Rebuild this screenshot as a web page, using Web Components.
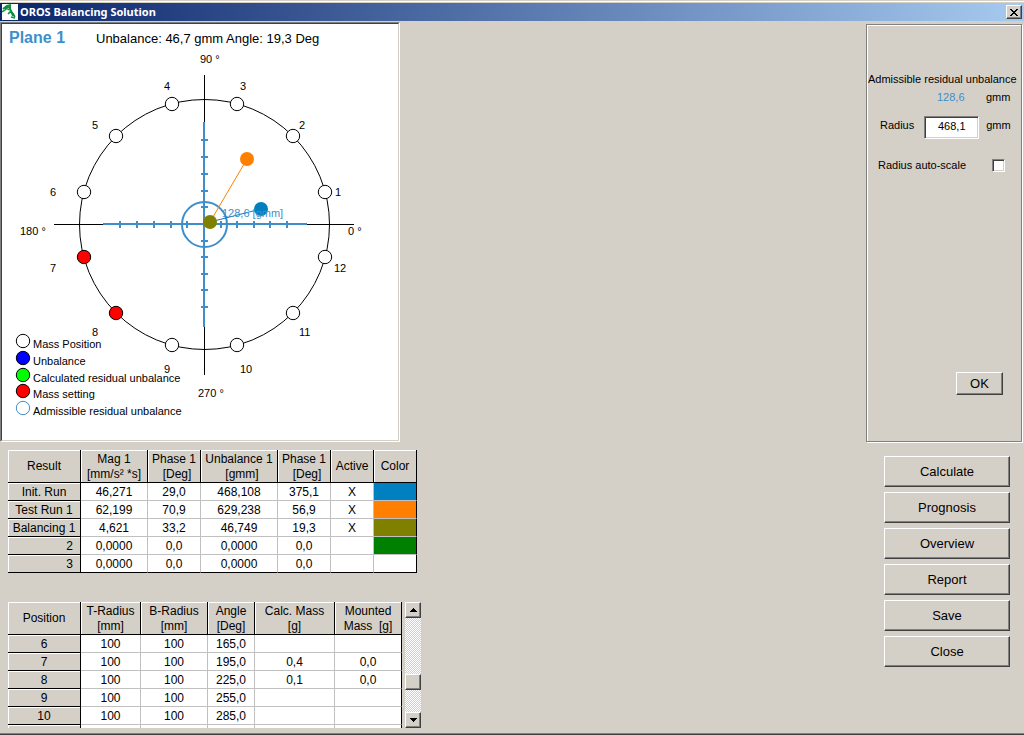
<!DOCTYPE html>
<html lang="en">
<head>
<meta charset="utf-8">
<title>OROS Balancing Solution</title>
<style>
  html, body { margin: 0; }
  body { background: #d4d0c8; color: #000; font-family: "Liberation Sans", Arial, sans-serif; font-size: 12px; }
</style>
</head>
<body>
<balancing-window>
  <title-bar slot="title">OROS Balancing Solution</title-bar>
  <polar-plot slot="plot"></polar-plot>
  <residual-panel slot="settings"></residual-panel>
  <result-table slot="tables"></result-table>
  <position-table slot="tables"></position-table>
  <push-button slot="actions">Calculate</push-button>
  <push-button slot="actions">Prognosis</push-button>
  <push-button slot="actions">Overview</push-button>
  <push-button slot="actions">Report</push-button>
  <push-button slot="actions">Save</push-button>
  <push-button slot="actions">Close</push-button>
</balancing-window>

<script>
class BaseElement extends HTMLElement {
  constructor() {
    super();
    this.attachShadow({ mode: 'open' }).innerHTML = this.template();
  }
}

const bevel = `
  border: 1px solid; border-color: #fff #404040 #404040 #fff;
  box-shadow: inset -1px -1px #808080; background: #d4d0c8;`;

class BalancingWindow extends BaseElement {
  template() {
    return `<style>
      :host { display: flex; flex-direction: column; box-sizing: border-box; min-height: 100vh;
        padding-top: 1px; border-bottom: 1px solid #404040; box-shadow: inset 0 -1px #808080; }
      .frame { border-top: 1px solid #fff; padding-top: 1px; }
      main { display: grid; grid-template-columns: auto auto; justify-content: space-between; align-items: start; row-gap: 8px; padding-top: 1px; }
      .plot { justify-self: start; }
      .settings { padding: 2px 2px 0 0; }
      .tables { padding: 0 0 5px 8px; display: flex; flex-direction: column; gap: 29px; align-items: flex-start; }
      .actions { display: flex; flex-direction: column; gap: 5px; padding: 6px 14px 0 0; justify-self: end; width: 126px; }
    </style>
    <div class="frame"><slot name="title"></slot></div>
    <main>
      <div class="plot"><slot name="plot"></slot></div>
      <div class="settings"><slot name="settings"></slot></div>
      <div class="tables"><slot name="tables"></slot></div>
      <div class="actions"><slot name="actions"></slot></div>
    </main>`;
  }
}

class TitleBar extends BaseElement {
  template() {
    return `<style>
      :host { display: flex; align-items: center; height: 18px; padding: 0 2px; gap: 2px; color: #fff;
        background: linear-gradient(90deg, #0a246a, #a6caf0); font: bold 11px/18px "Noto Sans", Tahoma, sans-serif; }
      svg { display: block; }
      .text { flex: 1; }
      button { display: grid; place-items: center; width: 16px; height: 14px; padding: 0; border-radius: 0; ${bevel} }
    </style>
    <svg width="16" height="16" viewBox="0 0 16 16" aria-hidden="true">
      <path fill="#fff" d="M0 0h16v16H0z"/>
      <g fill="none" stroke="#0a8f3c">
        <path stroke-width="2" d="M1 5l4-3 4-1M8 1v4l2 4 1 3"/>
        <path stroke-width="1.5" d="M0 8l3-2 2-2 2 2M3 4l5-1M6 10l2-2 2 1 3 4M9 13l4 1M11 9l2 4"/>
      </g>
    </svg>
    <span class="text"><slot></slot></span>
    <button type="button" aria-label="Close window">
      <svg width="8" height="7" viewBox="0 0 8 7"><path d="M0 0h2v1h1v1h2V1h1V0h2v1H7v1H6v1H5v1h1v1h1v1h1v1H6V6H5V5H3v1H2v1H0V6h1V5h1V4h1V3H2V2H1V1H0z"/></svg>
    </button>`;
  }
}

class PushButton extends BaseElement {
  template() {
    return `<style>
      :host { display: block; }
      button { display: block; width: 100%; height: var(--button-height, 31px); padding: 0; border-radius: 0; color: #000;
        font: 13px/16px "Liberation Sans", Arial, sans-serif; ${bevel} }
    </style><button type="button"><slot></slot></button>`;
  }
}

class PolarPlot extends BaseElement {
  template() {
    const blue = '#3e8ecb', c = 204.5, cy = 224.5;
    const ticks = [-84, -67, -50, -33, -17, 17, 33, 50, 66, 83].map(d =>
      `<path d="M${204 + d} 221v7M201 ${224 + d}h7"/>`).join('');
    const masses = Array.from({ length: 12 }, (_, i) => {
      const a = (15 + 30 * i) * Math.PI / 180;
      const fill = i === 6 || i === 7 ? '#f00' : '#fff';
      return `<circle cx="${Math.round(c + 125 * Math.cos(a))}" cy="${Math.round(cy - 125 * Math.sin(a))}" r="6.7" fill="${fill}"/>`;
    }).join('');
    const labels = [[335, 196, '1'], [299, 129, '2'], [240, 90, '3'], [164, 90, '4'], [92, 129, '5'], [50, 196, '6'],
      [50, 272, '7'], [92, 336, '8'], [164, 373, '9'], [240, 373, '10'], [299, 336, '11'], [334, 272, '12'],
      [200, 63, '90 °'], [348, 235, '0 °'], [20, 235, '180 °'], [198, 397, '270 °']]
      .map(([x, y, t]) => `<text x="${x}" y="${y}">${t}</text>`).join('');
    const legend = [[341, '#fff', '#000', 'Mass Position'], [358, '#00f', '#000', 'Unbalance'], [375, '#0f0', '#000', 'Calculated residual unbalance'],
      [391, '#f00', '#000', 'Mass setting'], [408, '#fff', blue, 'Admissible residual unbalance']]
      .map(([y, f, s, t]) => `<circle cx="23" cy="${y}" r="6.7" fill="${f}" stroke="${s}"/><text x="33" y="${y + 7}">${t}</text>`).join('');
    return `<style>
      :host { display: block; border: 1px solid; border-color: #808080 #fff #fff #808080; }
      svg { display: block; width: 396px; height: auto; background: #fff; border: 1px solid; border-color: #404040 #d4d0c8 #d4d0c8 #404040; }
      text { font: 11px "Liberation Sans", Arial, sans-serif; }
      .plane { font-size: 16px; font-weight: bold; }
      .summary { font-size: 13px; }
    </style>
    <svg viewBox="2 24 396 416" role="img" aria-label="Polar plot of plane 1">
      <text class="plane" x="9" y="43" fill="${blue}">Plane 1</text>
      <text class="summary" x="96" y="43">Unbalance: 46,7 gmm Angle: 19,3 Deg</text>
      <g fill="none" stroke="#000"><path d="M204.500 75v300M54 224.500h300"/><circle cx="${c}" cy="${cy}" r="125"/></g>
      <g stroke="#000">${masses}</g>
      <g fill="none" stroke="${blue}" stroke-width="2"><path d="M204 122v205M103 224h204"/>${ticks}<circle cx="${c}" cy="${cy}" r="22.5"/></g>
      <path d="M210 222L247 159" stroke="#ff8000"/><circle cx="247" cy="159" r="7" fill="#ff8000"/>
      <path d="M210 222L261 209" stroke="#0080c0"/><circle cx="261" cy="209" r="7" fill="#0080c0"/>
      <circle cx="210" cy="222" r="7" fill="#808000"/>
      <text x="222" y="217" fill="${blue}">128,6 [gmm]</text>
      ${labels}${legend}
    </svg>`;
  }
}

class ResidualPanel extends BaseElement {
  template() {
    return `<style>
      :host { display: flex; flex-direction: column; box-sizing: border-box; width: 156px; height: 418px; padding-top: 47px;
        border: 1px solid #808080; box-shadow: inset 1px 1px #fff, 1px 1px #fff; font-size: 11px; line-height: 14px; }
      p { margin: 0; padding-left: 1px; white-space: nowrap; }
      .row { display: flex; align-items: center; }
      .value { display: grid; grid-template-columns: 1fr 28px; padding: 4px 7px 0 70px; }
      output { color: #3e8ecb; }
      .radius { align-items: flex-start; padding: 12px 8px 0 13px; gap: 10px; }
      .radius label, .unit { padding-top: 2px; }
      input[type=text] { box-sizing: border-box; width: 55px; height: 23px; padding: 0 0 3px; text-align: center; border-radius: 0;
        font: 11px/14px "Liberation Sans", Arial, sans-serif; background: #fff; border: 1px solid; border-color: #808080 #fff #fff #808080;
        box-shadow: inset 1px 1px #404040, inset -1px -1px #d4d0c8; }
      .unit { margin-left: -3px; }
      .scale { justify-content: space-between; padding: 19px 16px 0 11px; }
      input[type=checkbox] { appearance: none; box-sizing: border-box; width: 13px; height: 13px; margin: 0; background: #fff; border: 1px solid; border-color: #808080 #fff #fff #808080;
        box-shadow: inset 1px 1px #404040, inset -1px -1px #d4d0c8; }
      .ok { width: 47px; margin: auto 18px 46px auto; --button-height: 23px; }
    </style>
    <p>Admissible residual unbalance</p>
    <div class="value"><output>128,6</output><span>gmm</span></div>
    <div class="row radius"><label for="radius">Radius</label><input id="radius" type="text" value="468,1"><span class="unit">gmm</span></div>
    <div class="row scale"><label for="auto">Radius auto-scale</label><input id="auto" type="checkbox"></div>
    <push-button class="ok">OK</push-button>`;
  }
}

const tableStyle = `
  table { border-collapse: separate; border-spacing: 0; table-layout: fixed; font-size: 12px; }
  th, td { padding: 1px 0 0; font-weight: normal; text-align: center; white-space: nowrap; line-height: 16px; height: 16px; }
  td { background: #fff; border: solid #c0c0c0; border-width: 0 1px 1px 0; }
  td:last-child { border-right-color: #000; }
  th { background: #d4d0c8; border: solid #000; border-width: 0 1px 1px 0; box-shadow: inset 1px 1px #fff; }
  thead th { height: 31px; line-height: 15px; }
  .unit { padding-left: 6px; }`;
const cols = widths => `<colgroup>${widths.map(w => `<col style="width:${w}px">`).join('')}</colgroup>`;
const head = names => `<thead><tr>${names.map(n => `<th scope="col">${n}</th>`).join('')}</tr></thead>`;

class ResultTable extends BaseElement {
  template() {
    const rows = [
      ['Init. Run', '46,271', '29,0', '468,108', '375,1', 'X', '#0080c0'],
      ['Test Run 1', '62,199', '70,9', '629,238', '56,9', 'X', '#ff8000'],
      ['Balancing 1', '4,621', '33,2', '46,749', '19,3', 'X', '#808000'],
      ['2', '0,0000', '0,0', '0,0000', '0,0', '', '#008000'],
      ['3', '0,0000', '0,0', '0,0000', '0,0', '', '#ffffff']];
    return `<style>:host { display: block; } ${tableStyle}
      table { width: 409px; }
      tbody tr:last-child td { border-bottom-color: #000; }
      .num { text-align: right; padding-right: 7px; }
    </style>
    <table>${cols([73, 67, 53, 77, 53, 43, 43])}
    ${head(['Result', 'Mag 1<br>[mm/s² *s]', 'Phase 1<br><span class="unit">[Deg]</span>', 'Unbalance 1<br><span class="unit">[gmm]</span>',
      'Phase 1<br><span class="unit">[Deg]</span>', 'Active', 'Color'])}
    <tbody>${rows.map(r => `<tr><th scope="row"${r[0].length === 1 ? ' class="num"' : ''}>${r[0]}</th>${r.slice(1, 6).map(v => `<td>${v}</td>`).join('')}<td style="background:${r[6]}"></td></tr>`).join('')}</tbody></table>`;
  }
}

class PositionTable extends BaseElement {
  template() {
    const rows = [['6', '165,0', '', ''], ['7', '195,0', '0,4', '0,0'], ['8', '225,0', '0,1', '0,0'], ['9', '255,0', '', ''], ['10', '285,0', '', '']];
    return `<style>:host { display: flex; gap: 3px; height: 126px; overflow: hidden; } ${tableStyle}
      table { width: 394px; }
    </style>
    <div><table>${cols([73, 60, 67, 47, 80, 67])}
    ${head(['Position', 'T-Radius<br>[mm]', 'B-Radius<br>[mm]', 'Angle<br>[Deg]', 'Calc. Mass<br>[g]', 'Mounted<br>Mass&nbsp; [g]'])}
    <tbody>${rows.map(([p, a, m, n]) => `<tr><th scope="row">${p}</th><td>100</td><td>100</td><td>${a}</td><td>${m}</td><td>${n}</td></tr>`).join('')}
    <tr><th></th><td></td><td></td><td></td><td></td><td></td></tr></tbody></table></div>
    <scroll-rail></scroll-rail>`;
  }
}

class ScrollRail extends BaseElement {
  template() {
    return `<style>
      :host { display: flex; flex-direction: column; width: 16px; background: repeating-conic-gradient(#fff 0 25%, #d4d0c8 0 50%) 0 0 / 2px 2px; }
      button, .thumb { box-sizing: border-box; width: 16px; height: 16px; flex: none; padding: 0; border-radius: 0; display: grid; place-items: center; ${bevel} }
      .before { flex: 56; } .after { flex: 22; }
    </style>
    <button type="button" aria-label="Scroll up"><svg width="7" height="4" viewBox="0 0 7 4"><path d="M3 0h1v1h1v1h1v1h1v1H0V3h1V2h1V1h1z"/></svg></button>
    <div class="before"></div><div class="thumb"></div><div class="after"></div>
    <button type="button" aria-label="Scroll down"><svg width="7" height="4" viewBox="0 0 7 4"><path d="M0 0h7v1H6v1H5v1H4v1H3V3H2V2H1V1H0z"/></svg></button>`;
  }
}

customElements.define('push-button', PushButton);
customElements.define('scroll-rail', ScrollRail);
customElements.define('title-bar', TitleBar);
customElements.define('polar-plot', PolarPlot);
customElements.define('residual-panel', ResidualPanel);
customElements.define('result-table', ResultTable);
customElements.define('position-table', PositionTable);
customElements.define('balancing-window', BalancingWindow);
</script>
</body>
</html>
